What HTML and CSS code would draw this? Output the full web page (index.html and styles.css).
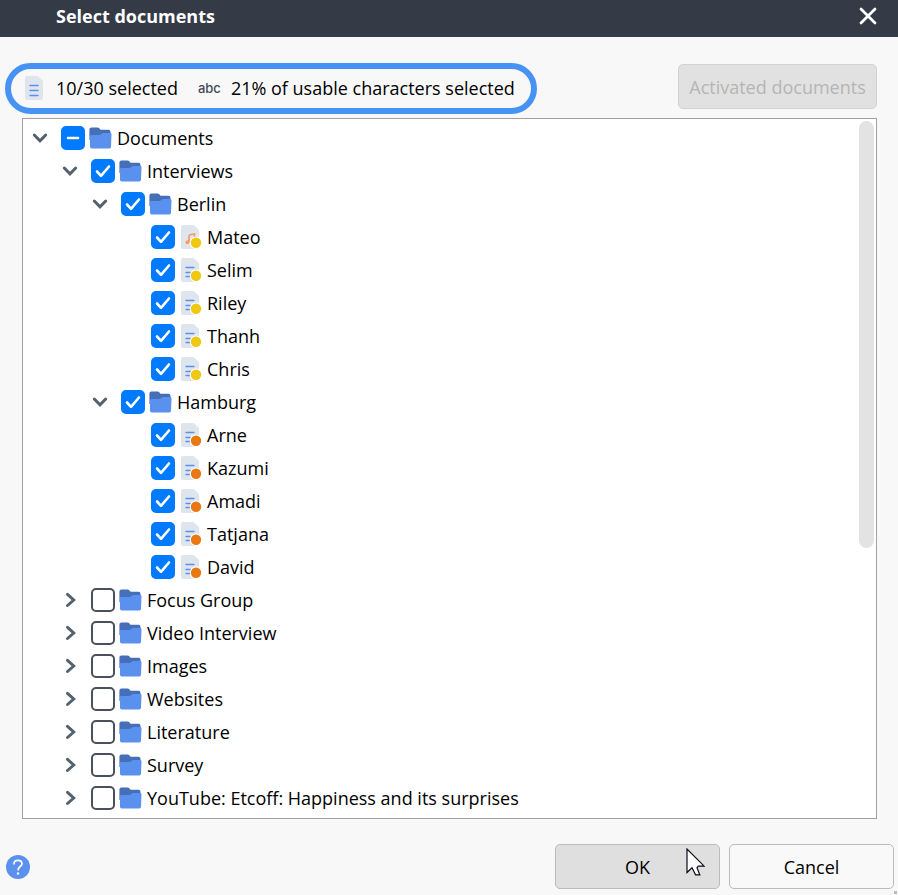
FILE: index.html
```html
<!DOCTYPE html>
<html lang="en">

<head>
    <meta charset="UTF-8" />
    <meta name="viewport" content="width=device-width, initial-scale=1" />
    <title>Select documents</title>
    <link rel="stylesheet" href="styles.css">
</head>

<body>
    <!-- Shared icons -->
    <svg class="sprite" aria-hidden="true">
        <symbol id="down" viewBox="0 0 16 16">
            <path d="M2.300 5L8 10.800l5.700-5.800" fill="none" stroke="#56616e" stroke-width="3" stroke-linecap="round" />
        </symbol>
        <symbol id="right" viewBox="0 0 16 16">
            <path d="M5.500 2.300L11.700 8l-6.200 5.500" fill="none" stroke="#56616e" stroke-width="3" stroke-linecap="round" />
        </symbol>
        <symbol id="folder" viewBox="0 0 24 24">
            <path d="M.400 3.500a2 2 0 0 1 2-2H8.600q1 0 1.700.8l1.200 1.400h8a2 2 0 0 1 2 2V14H.4z" fill="#466fb8" />
            <path d="M1 10.300q0-1.300 1.300-1.300h8q1 0 1.800-.7l.5-.5q.8-.7 1.800-.7h6.800q1.300 0 1.300 1.300L22 20.800q0 1.700-1.700 1.700H2.700Q1 22.500 1 20.800z" fill="#5b91ee" />
        </symbol>
        <symbol id="page" viewBox="0 0 24 24">
            <path d="M4 0h10.500L20 5v17a2 2 0 0 1-2 2H4a2 2 0 0 1-2-2V2a2 2 0 0 1 2-2z" fill="#dfe5ed" />
        </symbol>
        <symbol id="text" viewBox="0 0 24 24">
            <use href="#page" />
            <path d="M7 9.500h8M7 14.500h5M7 18.500h8" stroke="#5b91ee" stroke-width="1.400" stroke-linecap="round" />
        </symbol>
        <symbol id="audio" viewBox="0 0 24 24">
            <use href="#page" />
            <path d="M10 17v-5.500q0-1.500 1.500-1.800l4-.7v3" fill="none" stroke="#fb9a62" stroke-width="1.700" />
            <circle cx="8.500" cy="17.300" r="2" fill="#fb9a62" />
        </symbol>
        <symbol id="dot" viewBox="0 0 24 24">
            <circle cx="17" cy="17.700" r="6.300" fill="#fff" />
            <circle cx="17" cy="17.700" r="5.200" fill="currentColor" />
        </symbol>
    </svg>

    <header class="titlebar">
        <h1>Select documents</h1>
        <button class="close" type="button" aria-label="Close">
            <svg viewBox="0 0 18 18" width="18" height="18">
                <path d="M2 2l14 14M16 2L2 16" stroke="#fff" stroke-width="2.800" stroke-linecap="round" />
            </svg>
        </button>
    </header>

    <main class="content">
        <div class="toolbar">
            <div class="summary">
                <svg class="summary-icon" viewBox="0 0 18 24">
                    <path d="M2 0h11l5 5v17a2 2 0 0 1-2 2H2a2 2 0 0 1-2-2V2a2 2 0 0 1 2-2z" fill="#dfe5ed" />
                    <path d="M5 9.500h8M5 14.500h8M5 19.500h8" stroke="#5b91ee" stroke-width="1.400" stroke-linecap="round" />
                </svg>
                <span>10/30 selected</span>
                <span class="abc">abc</span>
                <span>21% of usable characters selected</span>
            </div>
            <button class="btn activated" type="button" disabled>Activated documents</button>
        </div>

        <div class="tree-box">
            <ul class="tree">
                <li>
                    <div class="row">
                        <button class="toggle" type="button" aria-label="Collapse Documents"><svg><use href="#down" /></svg></button>
                        <input type="checkbox" id="documents">
                        <label for="documents"><svg class="icon"><use href="#folder" /></svg>Documents</label>
                    </div>
                    <ul>
                        <li>
                            <div class="row">
                                <button class="toggle" type="button" aria-label="Collapse Interviews"><svg><use href="#down" /></svg></button>
                                <input type="checkbox" id="interviews" checked>
                                <label for="interviews"><svg class="icon"><use href="#folder" /></svg>Interviews</label>
                            </div>
                            <ul>
                                <li>
                                    <div class="row">
                                        <button class="toggle" type="button" aria-label="Collapse Berlin"><svg><use href="#down" /></svg></button>
                                        <input type="checkbox" id="berlin" checked>
                                        <label for="berlin"><svg class="icon"><use href="#folder" /></svg>Berlin</label>
                                    </div>
                                    <ul class="yellow">
                                        <li class="row leaf">
                                            <input type="checkbox" id="mateo" checked>
                                            <label for="mateo"><svg class="icon"><use href="#audio" /><use href="#dot" /></svg>Mateo</label>
                                        </li>
                                        <li class="row leaf">
                                            <input type="checkbox" id="selim" checked>
                                            <label for="selim"><svg class="icon"><use href="#text" /><use href="#dot" /></svg>Selim</label>
                                        </li>
                                        <li class="row leaf">
                                            <input type="checkbox" id="riley" checked>
                                            <label for="riley"><svg class="icon"><use href="#text" /><use href="#dot" /></svg>Riley</label>
                                        </li>
                                        <li class="row leaf">
                                            <input type="checkbox" id="thanh" checked>
                                            <label for="thanh"><svg class="icon"><use href="#text" /><use href="#dot" /></svg>Thanh</label>
                                        </li>
                                        <li class="row leaf">
                                            <input type="checkbox" id="chris" checked>
                                            <label for="chris"><svg class="icon"><use href="#text" /><use href="#dot" /></svg>Chris</label>
                                        </li>
                                    </ul>
                                </li>
                                <li>
                                    <div class="row">
                                        <button class="toggle" type="button" aria-label="Collapse Hamburg"><svg><use href="#down" /></svg></button>
                                        <input type="checkbox" id="hamburg" checked>
                                        <label for="hamburg"><svg class="icon"><use href="#folder" /></svg>Hamburg</label>
                                    </div>
                                    <ul class="orange">
                                        <li class="row leaf">
                                            <input type="checkbox" id="arne" checked>
                                            <label for="arne"><svg class="icon"><use href="#text" /><use href="#dot" /></svg>Arne</label>
                                        </li>
                                        <li class="row leaf">
                                            <input type="checkbox" id="kazumi" checked>
                                            <label for="kazumi"><svg class="icon"><use href="#text" /><use href="#dot" /></svg>Kazumi</label>
                                        </li>
                                        <li class="row leaf">
                                            <input type="checkbox" id="amadi" checked>
                                            <label for="amadi"><svg class="icon"><use href="#text" /><use href="#dot" /></svg>Amadi</label>
                                        </li>
                                        <li class="row leaf">
                                            <input type="checkbox" id="tatjana" checked>
                                            <label for="tatjana"><svg class="icon"><use href="#text" /><use href="#dot" /></svg>Tatjana</label>
                                        </li>
                                        <li class="row leaf">
                                            <input type="checkbox" id="david" checked>
                                            <label for="david"><svg class="icon"><use href="#text" /><use href="#dot" /></svg>David</label>
                                        </li>
                                    </ul>
                                </li>
                            </ul>
                        </li>
                        <li class="row">
                            <button class="toggle" type="button" aria-label="Expand Focus Group"><svg><use href="#right" /></svg></button>
                            <input type="checkbox" id="focus">
                            <label for="focus"><svg class="icon"><use href="#folder" /></svg>Focus Group</label>
                        </li>
                        <li class="row">
                            <button class="toggle" type="button" aria-label="Expand Video Interview"><svg><use href="#right" /></svg></button>
                            <input type="checkbox" id="video">
                            <label for="video"><svg class="icon"><use href="#folder" /></svg>Video Interview</label>
                        </li>
                        <li class="row">
                            <button class="toggle" type="button" aria-label="Expand Images"><svg><use href="#right" /></svg></button>
                            <input type="checkbox" id="images">
                            <label for="images"><svg class="icon"><use href="#folder" /></svg>Images</label>
                        </li>
                        <li class="row">
                            <button class="toggle" type="button" aria-label="Expand Websites"><svg><use href="#right" /></svg></button>
                            <input type="checkbox" id="websites">
                            <label for="websites"><svg class="icon"><use href="#folder" /></svg>Websites</label>
                        </li>
                        <li class="row">
                            <button class="toggle" type="button" aria-label="Expand Literature"><svg><use href="#right" /></svg></button>
                            <input type="checkbox" id="literature">
                            <label for="literature"><svg class="icon"><use href="#folder" /></svg>Literature</label>
                        </li>
                        <li class="row">
                            <button class="toggle" type="button" aria-label="Expand Survey"><svg><use href="#right" /></svg></button>
                            <input type="checkbox" id="survey">
                            <label for="survey"><svg class="icon"><use href="#folder" /></svg>Survey</label>
                        </li>
                        <li class="row">
                            <button class="toggle" type="button" aria-label="Expand YouTube"><svg><use href="#right" /></svg></button>
                            <input type="checkbox" id="youtube">
                            <label for="youtube"><svg class="icon"><use href="#folder" /></svg>YouTube: Etcoff: Happiness and its surprises</label>
                        </li>
                    </ul>
                </li>
            </ul>
            <div class="scrollbar">
                <div class="thumb"></div>
            </div>
        </div>
    </main>

    <footer class="footer">
        <button class="help" type="button" aria-label="Help">
            <svg viewBox="0 0 24 24" width="24" height="24">
                <circle cx="12" cy="12" r="12" fill="#5b91ee" />
                <path d="M8 8.800C8 6.500 9.700 5.300 12 5.300s4 1.300 4 3.400c0 2.700-3.900 2.900-3.900 6" fill="none" stroke="#fff" stroke-width="1.700" stroke-linecap="round" />
                <circle cx="12" cy="18.500" r="1.200" fill="#fff" />
            </svg>
        </button>
        <button class="btn ok" type="button">OK
            <svg class="cursor" viewBox="0 0 19 28" width="19" height="28">
                <path d="M1 1v23.500l5-4.700 3.600 7h4.200l-2.800-7 1.200-1.600h6z" fill="#fff" stroke="#0b0b1a" stroke-width="1.200" />
            </svg>
        </button>
        <button class="btn" type="button">Cancel</button>
        <span class="grip"></span>
    </footer>

    <script>
        // Only part of the tree is ticked
        document.getElementById('documents').indeterminate = true;
    </script>
</body>

</html>
```
FILE: styles.css
```css
* {
    box-sizing: border-box;
}

body {
    margin: 0;
    min-height: 100vh;
    display: flex;
    flex-direction: column;
    background: #f8f8f8;
    color: #000;
    font-family: 'Segoe UI', 'Open Sans', 'Noto Sans', sans-serif;
    font-size: 18px;
    line-height: 26px;
}

button {
    font: inherit;
    color: inherit;
}

.sprite {
    display: none;
}

/* Title bar */
.titlebar {
    display: flex;
    align-items: center;
    justify-content: space-between;
    height: 37px;
    padding: 0 21px 6px 56px;
    background: #343a46;
    color: #fff;
}

h1 {
    margin: 0;
    font-size: 18px;
    font-weight: 700;
}

.close,
.help,
.toggle {
    display: flex;
    padding: 0;
    border: none;
    background: none;
    cursor: pointer;
}

.content {
    flex: 1;
    display: flex;
    flex-direction: column;
    padding: 26px 21px 0 22px;
}

/* Selection summary */
.toolbar {
    display: flex;
    align-items: flex-start;
    justify-content: space-between;
    margin: 0 0 4px -17px;
}

.summary {
    display: flex;
    align-items: center;
    height: 51px;
    padding: 0 16px 2px 14px;
    border: 6px solid #4793f3;
    border-radius: 26px;
    white-space: nowrap;
}

.summary-icon {
    width: 18px;
    height: 24px;
    margin-right: 13px;
}

.abc {
    margin: 0 10px 0 20px;
    font-family: Inter, sans-serif;
    font-size: 13px;
    font-weight: 500;
    color: #444b55;
}

.btn {
    position: relative;
    width: 165px;
    height: 45px;
    border: 1px solid #bbb;
    border-radius: 5px;
    background: #f9f9f9;
    cursor: pointer;
}

.btn:hover,
.btn.ok {
    background: #dfdfdf;
}

.btn.activated {
    width: 199px;
    margin-top: 1px;
    padding: 0;
    border-color: #d2d2d2;
    background: #e1e1e1;
    color: #b5b5b5;
    white-space: nowrap;
    cursor: default;
}

/* Document tree */
.tree-box {
    flex: 1;
    display: flex;
    border: 1px solid #a0a0a0;
    background: #fff;
}

.tree {
    flex: 1;
    padding: 2px 0 4px 9px;
}

ul {
    margin: 0;
    padding: 0;
    list-style: none;
}

.tree ul {
    padding-left: 30px;
}

.row {
    display: flex;
    align-items: center;
    height: 33px;
}

.leaf {
    padding-left: 29px;
}

.toggle {
    margin-right: 13px;
}

.toggle svg {
    width: 16px;
    height: 16px;
}

.row label {
    display: flex;
    align-items: center;
    gap: 4px;
    white-space: nowrap;
}

.icon {
    width: 24px;
    height: 24px;
}

.yellow .icon {
    color: #eec811;
}

.orange .icon {
    color: #e97812;
}

input[type="checkbox"] {
    appearance: none;
    width: 24px;
    height: 24px;
    margin: 0 4px 0 0;
    border: 2px solid #4a515b;
    border-radius: 5px;
    background: #fff center / 24px 24px no-repeat;
}

input[type="checkbox"]:checked,
input[type="checkbox"]:indeterminate {
    border-color: #007aff;
    background-color: #007aff;
}

input[type="checkbox"]:checked {
    background-image: url("data:image/svg+xml,%3Csvg xmlns='http://www.w3.org/2000/svg' viewBox='0 0 24 24'%3E%3Cpath d='M6 12.500l4 4.300L18 7.500' fill='none' stroke='white' stroke-width='2.600' stroke-linecap='round' stroke-linejoin='round'/%3E%3C/svg%3E");
}

input[type="checkbox"]:indeterminate {
    background-image: url("data:image/svg+xml,%3Csvg xmlns='http://www.w3.org/2000/svg' viewBox='0 0 24 24'%3E%3Cpath d='M7 12h10' stroke='white' stroke-width='2.600' stroke-linecap='round'/%3E%3C/svg%3E");
}

.scrollbar {
    width: 17px;
    padding: 2px 2px 2px 0;
}

.thumb {
    height: 61.5%;
    border-radius: 8px;
    background: #e3e3e3;
}

/* Dialog buttons */
.footer {
    position: relative;
    display: flex;
    align-items: center;
    gap: 9px;
    padding: 25px 4px 6px 6px;
}

.help {
    margin-right: auto;
}

/* Pointer resting on the OK button */
.cursor {
    position: absolute;
    top: 3px;
    right: 14px;
}

.grip {
    position: absolute;
    right: 1px;
    bottom: 1px;
    width: 3px;
    height: 3px;
    background: #bbb;
}
```
